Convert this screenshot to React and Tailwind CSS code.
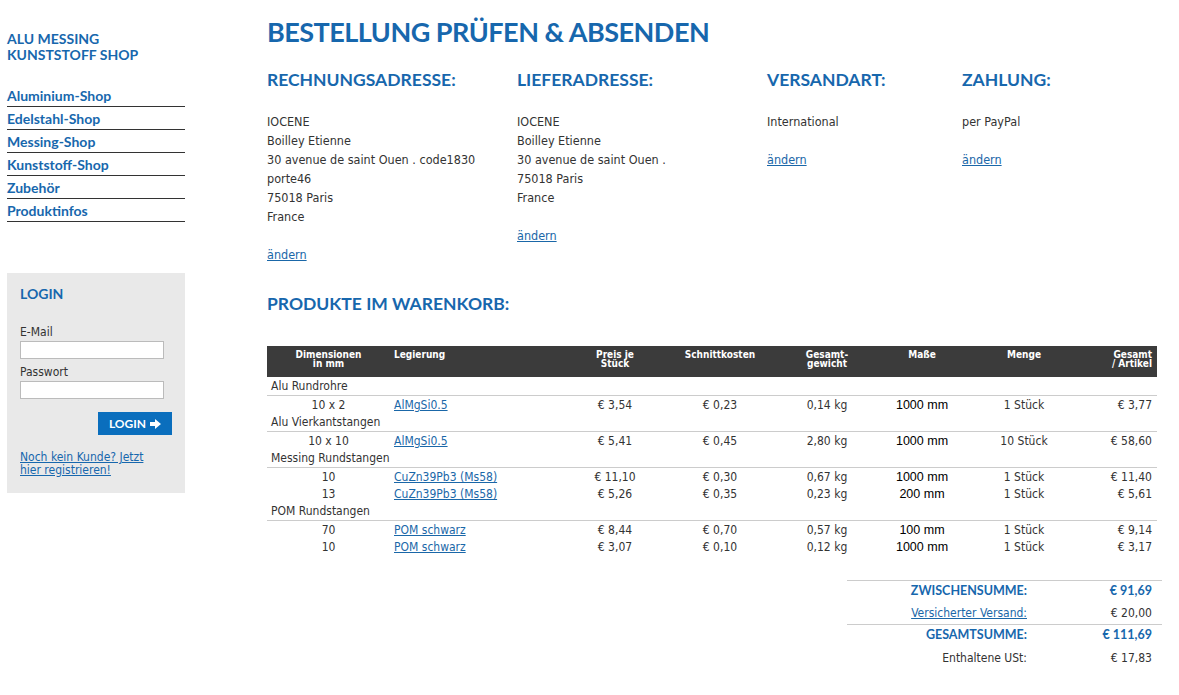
import React from "react";

const body = "font-['DejaVu_Sans_Condensed','DejaVu_Sans',sans-serif]";
const head = "font-['Lato',sans-serif]";

const navItems = ["Aluminium-Shop", "Edelstahl-Shop", "Messing-Shop", "Kunststoff-Shop", "Zubehör", "Produktinfos"];

const groups = [
  {
    name: "Alu Rundrohre",
    rows: [["10 x 2", "AlMgSi0.5", "€ 3,54", "€ 0,23", "0,14 kg", "1000 mm", "1 Stück", "€ 3,77"]],
  },
  {
    name: "Alu Vierkantstangen",
    rows: [["10 x 10", "AlMgSi0.5", "€ 5,41", "€ 0,45", "2,80 kg", "1000 mm", "10 Stück", "€ 58,60"]],
  },
  {
    name: "Messing Rundstangen",
    rows: [
      ["10", "CuZn39Pb3 (Ms58)", "€ 11,10", "€ 0,30", "0,67 kg", "1000 mm", "1 Stück", "€ 11,40"],
      ["13", "CuZn39Pb3 (Ms58)", "€ 5,26", "€ 0,35", "0,23 kg", "200 mm", "1 Stück", "€ 5,61"],
    ],
  },
  {
    name: "POM Rundstangen",
    rows: [
      ["70", "POM schwarz", "€ 8,44", "€ 0,70", "0,57 kg", "100 mm", "1 Stück", "€ 9,14"],
      ["10", "POM schwarz", "€ 3,07", "€ 0,10", "0,12 kg", "1000 mm", "1 Stück", "€ 3,17"],
    ],
  },
];

const cols = "grid grid-cols-[123px_170px_110px_100px_114px_76px_128px_69px]";

const Sidebar = () => (
  <div className="w-[178px] shrink-0 pt-[31px]">
    <div className={`${head} font-bold text-[14px] leading-[16px] text-[#1767ad]`}>
      ALU MESSING
      <br />
      KUNSTSTOFF SHOP
    </div>
    <ul className="mt-[21px]">
      {navItems.map((item) => (
        <li key={item} className="border-b border-[#333] h-[23px] flex items-center pt-[1px]">
          <a className={`${head} font-bold text-[14px] text-[#1767ad]`}>{item}</a>
        </li>
      ))}
    </ul>
    <div className="mt-[51px] bg-[#e9e9e9] px-[13px] pt-[10px] h-[220px]">
      <div className={`${head} font-bold text-[14px] text-[#1767ad]`}>LOGIN</div>
      <div className={`${body} text-[12px] text-[#333] mt-[21px] leading-[14px]`}>E-Mail</div>
      <input className="block mt-[2px] w-[144px] h-[18px] bg-white border border-[#bbb]" />
      <div className={`${body} text-[12px] text-[#333] mt-[6px] leading-[14px]`}>Passwort</div>
      <input className="block mt-[2px] w-[144px] h-[18px] bg-white border border-[#bbb]" />
      <div className="flex justify-end mt-[13px]">
        <button className={`${head} font-bold text-[12px] text-white bg-[#0a6ebd] w-[74px] h-[23px] flex items-center justify-center gap-[4px]`}>
          LOGIN
          <svg width="11" height="10" viewBox="0 0 11 10" fill="white">
            <path d="M0 3h5V0l6 5-6 5V7H0z" />
          </svg>
        </button>
      </div>
      <a className={`${body} block mt-[16px] text-[12px] leading-[13px] text-[#1767ad] underline`}>
        Noch kein Kunde? Jetzt
        <br />
        hier registrieren!
      </a>
    </div>
  </div>
);

const Block = ({ title, width, children }) => (
  <div className={width}>
    <h2 className={`${head} font-bold text-[17.5px] leading-[22px] text-[#1767ad]`}>{title}</h2>
    <div className={`${body} text-[12.5px] leading-[19px] text-[#333] mt-[21px]`}>{children}</div>
  </div>
);

const Link = ({ children }) => <a className="text-[#1a67a8] underline">{children}</a>;

export default function App() {
  return (
    <div className="flex bg-white min-h-[695px] pl-[7px]">
      <Sidebar />
      <div className="ml-[82px] w-[890px] pt-[15px]">
        <h1 className={`${head} font-bold text-[27px] tracking-[-0.5px] leading-[34px] text-[#1767ad]`}>BESTELLUNG PRÜFEN &amp; ABSENDEN</h1>
        <div className="flex mt-[20px]">
          <Block title="RECHNUNGSADRESSE:" width="w-[250px]">
            <div>IOCENE</div>
            <div>Boilley Etienne</div>
            <div>30 avenue de saint Ouen . code1830</div>
            <div>porte46</div>
            <div>75018 Paris</div>
            <div>France</div>
            <div className="mt-[19px]"><Link>ändern</Link></div>
          </Block>
          <Block title="LIEFERADRESSE:" width="w-[250px]">
            <div>IOCENE</div>
            <div>Boilley Etienne</div>
            <div>30 avenue de saint Ouen .</div>
            <div>75018 Paris</div>
            <div>France</div>
            <div className="mt-[19px]"><Link>ändern</Link></div>
          </Block>
          <Block title="VERSANDART:" width="w-[195px]">
            <div>International</div>
            <div className="mt-[19px]"><Link>ändern</Link></div>
          </Block>
          <Block title="ZAHLUNG:" width="w-[195px]">
            <div>per PayPal</div>
            <div className="mt-[19px]"><Link>ändern</Link></div>
          </Block>
        </div>

        <h2 className={`${head} font-bold text-[17.5px] leading-[22px] text-[#1767ad] mt-[29px]`}>PRODUKTE IM WARENKORB:</h2>

        <div className="mt-[31px]">
          <div className={`${cols} bg-[#3b3b3b] h-[31px] pt-[4px] text-white font-bold text-[10px] leading-[9px] ${body}`}>
            <div className="text-center">Dimensionen<br />in mm</div>
            <div className="pl-[4px]">Legierung</div>
            <div className="text-center">Preis je<br />Stück</div>
            <div className="text-center">Schnittkosten</div>
            <div className="text-center">Gesamt-<br />gewicht</div>
            <div className="text-center">Maße</div>
            <div className="text-center">Menge</div>
            <div className="text-right pr-[5px]">Gesamt<br />/ Artikel</div>
          </div>
          {groups.map((g) => (
            <div key={g.name} className={`${body} text-[12px] text-[#333]`}>
              <div className="h-[19px] flex items-center pl-[4px] border-b border-[#ccc]">{g.name}</div>
              {g.rows.map((r, i) => (
                <div key={i} className={`${cols} h-[17px] items-center`}>
                  <div className="text-center">{r[0]}</div>
                  <div className="pl-[4px]"><Link>{r[1]}</Link></div>
                  <div className="text-center">{r[2]}</div>
                  <div className="text-center">{r[3]}</div>
                  <div className="text-center">{r[4]}</div>
                  <div className="text-center font-['Liberation_Sans',sans-serif] text-[12.5px] text-black">{r[5]}</div>
                  <div className="text-center">{r[6]}</div>
                  <div className="text-right pr-[5px]">{r[7]}</div>
                </div>
              ))}
            </div>
          ))}
        </div>

        <div className="flex justify-end mt-[25px] mr-[-5px]">
          <div className={`w-[315px] ${body} text-[12px] text-[#333]`}>
            <div className="border-t border-[#ccc] h-[22px] flex items-center">
              <div className={`w-[180px] text-right ${head} font-bold text-[12.5px] text-[#1767ad]`}>ZWISCHENSUMME:</div>
              <div className={`flex-1 text-right pr-[10px] ${head} font-bold text-[12.5px] text-[#1767ad]`}>€ 91,69</div>
            </div>
            <div className="h-[22px] flex items-center">
              <div className="w-[180px] text-right"><Link>Versicherter Versand:</Link></div>
              <div className="flex-1 text-right pr-[10px]">€ 20,00</div>
            </div>
            <div className="border-t border-[#ccc] h-[22px] flex items-center">
              <div className={`w-[180px] text-right ${head} font-bold text-[12.5px] text-[#1767ad]`}>GESAMTSUMME:</div>
              <div className={`flex-1 text-right pr-[10px] ${head} font-bold text-[12.5px] text-[#1767ad]`}>€ 111,69</div>
            </div>
            <div className="h-[23px] flex items-center">
              <div className="w-[180px] text-right">Enthaltene USt:</div>
              <div className="flex-1 text-right pr-[10px]">€ 17,83</div>
            </div>
          </div>
        </div>
      </div>
    </div>
  );
}
